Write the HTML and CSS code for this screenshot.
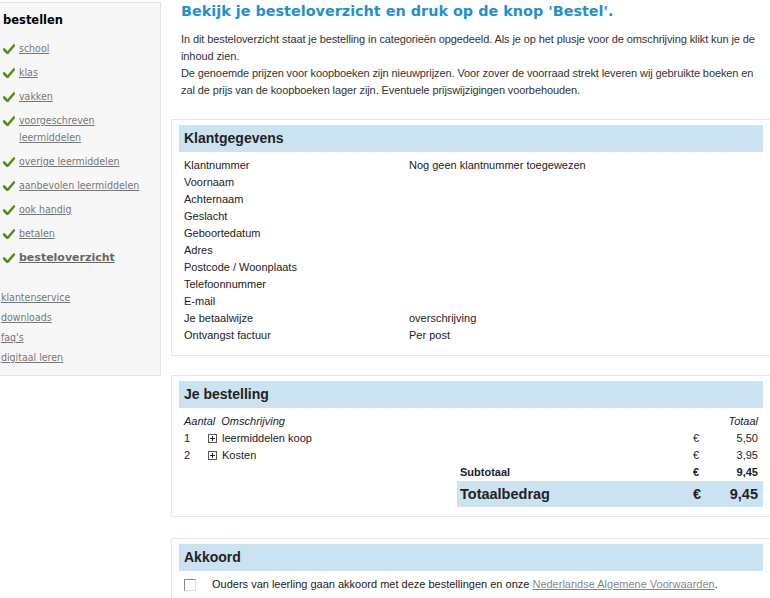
FILE: index.html
```html
<!DOCTYPE html>
<html>
<head>
<meta charset="utf-8">
<link rel="stylesheet" href="styles.css">
</head>
<body>
<div class="page">
  <aside class="sidebar">
    <div class="side-title">bestellen</div>
    <ul class="steps">
      <li><svg class="tick" viewBox="0 0 12 10"><path d="M1 5.5 L4.5 9 L11 1.5" fill="none" stroke="#5b8c1c" stroke-width="2.6" stroke-linecap="round" stroke-linejoin="round"/></svg><a href="#">school</a></li>
      <li><svg class="tick" viewBox="0 0 12 10"><path d="M1 5.5 L4.5 9 L11 1.5" fill="none" stroke="#5b8c1c" stroke-width="2.6" stroke-linecap="round" stroke-linejoin="round"/></svg><a href="#">klas</a></li>
      <li><svg class="tick" viewBox="0 0 12 10"><path d="M1 5.5 L4.5 9 L11 1.5" fill="none" stroke="#5b8c1c" stroke-width="2.6" stroke-linecap="round" stroke-linejoin="round"/></svg><a href="#">vakken</a></li>
      <li><svg class="tick" viewBox="0 0 12 10"><path d="M1 5.5 L4.5 9 L11 1.5" fill="none" stroke="#5b8c1c" stroke-width="2.6" stroke-linecap="round" stroke-linejoin="round"/></svg><a href="#" class="narrow">voorgeschreven leermiddelen</a></li>
      <li><svg class="tick" viewBox="0 0 12 10"><path d="M1 5.5 L4.5 9 L11 1.5" fill="none" stroke="#5b8c1c" stroke-width="2.6" stroke-linecap="round" stroke-linejoin="round"/></svg><a href="#">overige leermiddelen</a></li>
      <li><svg class="tick" viewBox="0 0 12 10"><path d="M1 5.5 L4.5 9 L11 1.5" fill="none" stroke="#5b8c1c" stroke-width="2.6" stroke-linecap="round" stroke-linejoin="round"/></svg><a href="#">aanbevolen leermiddelen</a></li>
      <li><svg class="tick" viewBox="0 0 12 10"><path d="M1 5.5 L4.5 9 L11 1.5" fill="none" stroke="#5b8c1c" stroke-width="2.6" stroke-linecap="round" stroke-linejoin="round"/></svg><a href="#">ook handig</a></li>
      <li><svg class="tick" viewBox="0 0 12 10"><path d="M1 5.5 L4.5 9 L11 1.5" fill="none" stroke="#5b8c1c" stroke-width="2.6" stroke-linecap="round" stroke-linejoin="round"/></svg><a href="#">betalen</a></li>
      <li class="current"><svg class="tick" viewBox="0 0 12 10"><path d="M1 5.5 L4.5 9 L11 1.5" fill="none" stroke="#5b8c1c" stroke-width="2.6" stroke-linecap="round" stroke-linejoin="round"/></svg><a href="#">besteloverzicht</a></li>
    </ul>
    <ul class="extra">
      <li><a href="#">klantenservice</a></li>
      <li><a href="#">downloads</a></li>
      <li><a href="#">faq's</a></li>
      <li><a href="#">digitaal leren</a></li>
    </ul>
  </aside>
  <main class="main">
    <h1 class="title">Bekijk je besteloverzicht en druk op de knop 'Bestel'.</h1>
    <p class="intro">In dit besteloverzicht staat je bestelling in categorieën opgedeeld. Als je op het plusje voor de omschrijving klikt kun je de<br>inhoud zien.<br>De genoemde prijzen voor koopboeken zijn nieuwprijzen. Voor zover de voorraad strekt leveren wij gebruikte boeken en<br>zal de prijs van de koopboeken lager zijn. Eventuele prijswijzigingen voorbehouden.</p>

    <section class="box box-klant">
      <h2 class="band">Klantgegevens</h2>
      <div class="klant">
        <span>Klantnummer</span><span>Nog geen klantnummer toegewezen</span>
        <span>Voornaam</span><span></span>
        <span>Achternaam</span><span></span>
        <span>Geslacht</span><span></span>
        <span>Geboortedatum</span><span></span>
        <span>Adres</span><span></span>
        <span>Postcode / Woonplaats</span><span></span>
        <span>Telefoonnummer</span><span></span>
        <span>E-mail</span><span></span>
        <span>Je betaalwijze</span><span>overschrijving</span>
        <span>Ontvangst factuur</span><span>Per post</span>
      </div>
    </section>

    <section class="box box-order">
      <h2 class="band">Je bestelling</h2>
      <table class="order">
        <colgroup>
          <col class="c-aantal"><col class="c-plus"><col class="c-desc"><col class="c-euro"><col class="c-amt">
        </colgroup>
        <tr class="head">
          <td colspan="3">Aantal&nbsp; Omschrijving</td><td></td><td class="amt">Totaal</td>
        </tr>
        <tr>
          <td>1</td><td><span class="plus"></span></td><td>leermiddelen koop</td><td class="euro">€</td><td class="amt">5,50</td>
        </tr>
        <tr>
          <td>2</td><td><span class="plus"></span></td><td>Kosten</td><td class="euro">€</td><td class="amt">3,95</td>
        </tr>
        <tr class="sub">
          <td colspan="2"></td><td class="sublabel">Subtotaal</td><td class="euro">€</td><td class="amt">9,45</td>
        </tr>
        <tr class="total">
          <td colspan="2" class="blank"></td><td class="sublabel">Totaalbedrag</td><td class="euro">€</td><td class="amt">9,45</td>
        </tr>
      </table>
    </section>

    <section class="box box-akkoord">
      <h2 class="band">Akkoord</h2>
      <div class="agree">
        <span class="check"></span>
        <span>Ouders van leerling gaan akkoord met deze bestellingen en onze <a href="#">Nederlandse Algemene Voorwaarden</a>.</span>
      </div>
    </section>
  </main>
</div>
</body>
</html>
```

FILE: styles.css
```css
html, body {
  margin: 0;
  padding: 0;
  background: #fff;
  overflow: hidden;
}
body {
  font-family: "Liberation Sans", Arial, sans-serif;
  font-size: 11px;
  color: #222;
}
.page {
  display: flex;
  align-items: flex-start;
  width: 780px;
}
.sidebar {
  flex: none;
  margin-top: 2px;
  background: #f7f7f7;
  border: 1px solid #e4e4e4;
  border-left: none;
  box-sizing: border-box;
  width: 161px;
  height: 374px;
  font-family: "DejaVu Sans Condensed", "DejaVu Sans", sans-serif;
  font-size: 10.5px;
}
.side-title {
  font-family: "DejaVu Sans", sans-serif;
  font-weight: bold;
  font-size: 11.5px;
  color: #000;
  padding: 9px 0 0 3px;
  line-height: 17px;
}
.sidebar ul {
  list-style: none;
  margin: 0;
  padding: 0;
}
.steps {
  padding-top: 11px !important;
}
.steps li {
  display: flex;
  align-items: flex-start;
  line-height: 17px;
  margin-bottom: 7px;
  padding-left: 3px;
}
.steps .tick {
  width: 12px;
  height: 10px;
  flex: none;
  margin: 4px 4px 0 0;
}
.sidebar a {
  color: #777;
  text-decoration: underline;
}
.steps li a {
  width: 140px;
}
.steps li a.narrow {
  width: 90px;
}
.steps .current a {
  font-weight: bold;
  font-family: "DejaVu Sans", sans-serif;
  font-size: 11px;
  color: #666;
}
.extra {
  padding-top: 14px !important;
}
.extra li {
  line-height: 20px;
  padding-left: 1px;
}
.main {
  margin-left: 10px;
  width: 600px;
  flex: none;
}
.title {
  font-family: "DejaVu Sans", Verdana, sans-serif;
  font-weight: bold;
  font-size: 14.4px;
  line-height: 18px;
  color: #1f90d2;
  margin: 2px 0 0 10px;
}
.intro {
  margin: 11px 0 0 10px;
  line-height: 17px;
  color: #333;
  width: 600px;
  white-space: nowrap;
  letter-spacing: -0.1px;
}
.box {
  border: 1px solid #e6e6e6;
  padding: 5px 7px 11px 7px;
  margin-top: 20px;
}
.band {
  margin: 0;
  height: 27px;
  line-height: 27px;
  background: #cbe3f0;
  font-size: 14px;
  font-weight: bold;
  color: #222;
  padding-left: 5px;
}
.klant {
  display: grid;
  grid-template-columns: 225px 1fr;
  padding: 5px 0 0 5px;
  line-height: 17px;
}
.box-order {
  margin-top: 19px;
  padding-bottom: 9px;
}
.order {
  border-collapse: collapse;
  width: 100%;
  margin-top: 5px;
}
.order td {
  padding: 0;
  height: 17px;
  line-height: 17px;
  vertical-align: middle;
}
.c-aantal { width: 29px; }
.c-plus { width: 14px; }
.c-euro { width: 22px; }
.c-amt { width: 48px; }
.order tr td:first-child {
  padding-left: 5px;
}
.head td {
  font-style: italic;
}
.amt {
  text-align: right;
  padding-right: 5px !important;
}
.plus {
  display: inline-block;
  width: 7px;
  height: 7px;
  border: 1px solid #555;
  position: relative;
  vertical-align: -1px;
}
.plus::before {
  content: "";
  position: absolute;
  left: 1px;
  top: 3px;
  width: 5px;
  height: 1px;
  background: #222;
}
.plus::after {
  content: "";
  position: absolute;
  left: 3px;
  top: 1px;
  width: 1px;
  height: 5px;
  background: #222;
}
.order .sub td {
  font-weight: bold;
}
.order tr.sub td.sublabel,
.order tr.total td.sublabel {
  padding-left: 238px;
}
.order .total td {
  height: 26px;
  font-weight: bold;
  font-size: 14.5px;
}
.order .total td.euro,
.order .total td.amt {
  background: #cbe3f0;
}
.order .total td.sublabel {
  background: linear-gradient(to right, transparent 235px, #cbe3f0 235px);
}
.box-akkoord {
  margin-top: 21px;
  padding-bottom: 6px;
}
.agree {
  display: flex;
  align-items: center;
  padding: 5px 0 0 5px;
  line-height: 17px;
}
.check {
  width: 10px;
  height: 10px;
  border: 1px solid #888;
  border-right-color: #ddd;
  border-bottom-color: #ddd;
  margin-right: 16px;
  flex: none;
}
.agree a {
  color: #888;
}
```
